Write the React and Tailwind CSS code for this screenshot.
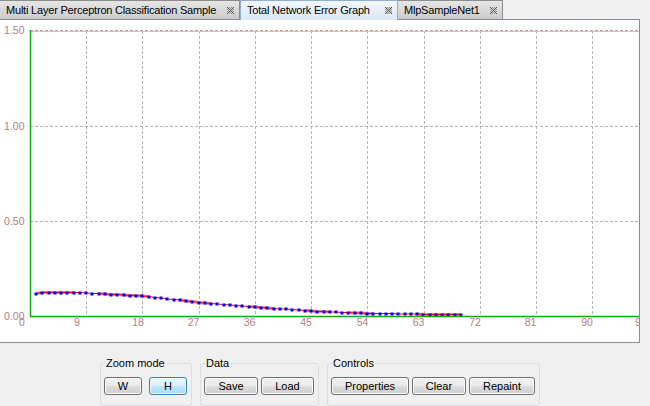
import React from 'react';

const FONT = { fontFamily: '"Liberation Sans", Arial, sans-serif' };

const keys = [
  [1, 293.3], [2, 292.3], [7, 292.3], [9, 293], [18, 296], [27, 302.3],
  [36, 307], [45, 311], [54, 313.3], [63, 314.3], [69, 314.5],
];

const yAt = (i) => {
  for (let k = 0; k < keys.length - 1; k++) {
    const [a, ya] = keys[k];
    const [b, yb] = keys[k + 1];
    if (i >= a && i <= b) return ya + ((yb - ya) * (i - a)) / (b - a);
  }
  return keys[keys.length - 1][1];
};

const points = Array.from({ length: 69 }, (_, n) => {
  const i = n + 1;
  return { i, x: 30 + 6.245 * i, y: Math.round(yAt(i) * 2) / 2 };
});

const bands = [[1, 7], [11, 19], [24, 29], [35, 39], [44, 48], [51, 55], [62, 69]];

const xTicks = [
  { g: 86.2, l: 77, t: '9' }, { g: 142.4, l: 138, t: '18' }, { g: 198.7, l: 193.5, t: '27' },
  { g: 254.9, l: 249.5, t: '36' }, { g: 311.1, l: 306, t: '45' }, { g: 367.3, l: 362.5, t: '54' },
  { g: 423.6, l: 418.5, t: '63' }, { g: 479.8, l: 475, t: '72' }, { g: 536, l: 530.5, t: '81' },
  { g: 592.2, l: 587, t: '90' },
];

const yTicks = [
  { y: 30.5, t: '1.50' }, { y: 126, t: '1.00' }, { y: 221, t: '0.50' }, { y: 316, t: '0.00' },
];

function CloseIcon() {
  const cells = [];
  for (let r = 0; r < 7; r++) {
    for (let c = 0; c < 7; c++) {
      let fill = (r + c) % 2 === 0 ? '#9a9a9a' : '#d4d4d4';
      if (r === c || r + c === 6) fill = '#505050';
      cells.push(<rect key={`${r}-${c}`} x={c} y={r} width="1" height="1" fill={fill} />);
    }
  }
  return (
    <svg width="7" height="7" viewBox="0 0 7 7" shapeRendering="crispEdges" className="shrink-0">
      {cells}
    </svg>
  );
}

function Tab({ label, width, active }) {
  return (
    <div
      className={
        'h-[20px] flex items-center pl-[6px] pr-[5px] text-[11px] tracking-[-0.2px] text-black border-r ' +
        (active
          ? 'bg-[linear-gradient(#f3f8fd,#d9e8f5)] border-l border-t border-[#8fb0cc]'
          : 'bg-[linear-gradient(#e6e6e6,#cccccc)] border-b border-t border-[#8c8c8c]')
      }
      style={{ width }}
    >
      <span className="whitespace-nowrap">{label}</span>
      <span className="ml-auto">
        <CloseIcon />
      </span>
    </div>
  );
}

function Btn({ children, w, selected }) {
  return (
    <button
      className={
        'h-[18px] rounded-[3px] border text-[11px] leading-none text-black shadow-[inset_0_0_0_1px_#fbfbfb] ' +
        (selected
          ? 'border-[#3c7fb1] bg-[linear-gradient(#eaf6fd_0%,#d9f0fc_50%,#bee6fd_50%,#a7d9f5_100%)]'
          : 'border-[#707070] bg-[linear-gradient(#f2f2f2_0%,#ebebeb_50%,#dddddd_50%,#cfcfcf_100%)]')
      }
      style={{ width: w }}
    >
      {children}
    </button>
  );
}

function Group({ title, children }) {
  return (
    <div className="relative border border-[#d5dfe5] rounded-[3px] pt-[13px] pl-[3px] pr-[4px] pb-[7px]">
      <span className="absolute -top-[8px] left-[4px] bg-[#f0f0f0] px-[1px] text-[11px] leading-[14px] text-black">
        {title}
      </span>
      <div className="flex gap-[3px]">{children}</div>
    </div>
  );
}

function Chart() {
  const line = points.map((p) => `${p.x},${p.y}`).join(' ');
  return (
    <svg width="639" height="322" className="block" style={FONT}>
      <g transform="translate(0,-20)">
        {xTicks.map((t) => (
          <line key={t.t} x1={Math.round(t.g) + 0.5} y1={31} x2={Math.round(t.g) + 0.5} y2={316}
            stroke="#b4b4b4" strokeDasharray="3 2" />
        ))}
        <line x1="30" y1="30.5" x2="639" y2="30.5" stroke="#a8a8a8" strokeDasharray="3 2" />
        <line x1="30" y1="31.5" x2="639" y2="31.5" stroke="#f2b8b8" />
        <line x1="30" y1="126.5" x2="639" y2="126.5" stroke="#b4b4b4" strokeDasharray="3 2" />
        <line x1="30" y1="221.5" x2="639" y2="221.5" stroke="#b4b4b4" strokeDasharray="3 2" />

        {bands.map(([a, b]) => (
          <polyline key={a}
            points={points.slice(a - 1, b).map((p) => `${p.x},${p.y}`).join(' ')}
            fill="none" stroke="#f08a8a" strokeWidth="3" />
        ))}
        <polyline points={line} fill="none" stroke="#ff0000" strokeWidth="1" />
        {points.map((p) => (
          <rect key={p.i} x={Math.round(p.x) - 1.5} y={Math.round(p.y) - 1.5} width="3" height="3"
            fill="#0000ff" />
        ))}

        <line x1="30.5" y1="30" x2="30.5" y2="316.5" stroke="#10aa10" strokeWidth="1.5" />
        <line x1="30" y1="316.5" x2="639" y2="316.5" stroke="#10aa10" strokeWidth="1.5" />

        {yTicks.map((t) => (
          <text key={t.t} x="24.5" y={t.y + 3.5} textAnchor="end" fontSize="10.5" fill="#b47e7e">{t.t}</text>
        ))}
        <text x="22" y="326" textAnchor="middle" fontSize="10.5" fill="#b47e7e">0</text>
        {xTicks.map((t) => (
          <text key={t.t} x={t.l} y="326" textAnchor="middle" fontSize="10.5" fill="#b47e7e">{t.t}</text>
        ))}
        <text x="641" y="326" textAnchor="middle" fontSize="10.5" fill="#b47e7e">99</text>
      </g>
    </svg>
  );
}

export default function App() {
  return (
    <div className="w-[650px] h-[406px] bg-[#f0f0f0] flex flex-col overflow-hidden" style={FONT}>
      <div className="flex w-[640px] h-[20px]">
        <Tab label="Multi Layer Perceptron Classification Sample" width={240} />
        <Tab label="Total Network Error Graph" width={158} active />
        <Tab label="MlpSampleNet1" width={105} />
        <div className="flex-1 border-b border-[#8c8c8c]" />
      </div>

      <div className="w-[640px] h-[323px] bg-white border-r border-b border-[#8c8c8c] overflow-hidden">
        <Chart />
      </div>

      <div className="flex-1 w-[640px] flex justify-center gap-2 pt-[20px]">
        <Group title="Zoom mode">
          <Btn w={38}>W</Btn>
          <span className="w-px" />
          <Btn w={38} selected>H</Btn>
        </Group>
        <Group title="Data">
          <Btn w={54}>Save</Btn>
          <Btn w={53}>Load</Btn>
        </Group>
        <Group title="Controls">
          <Btn w={78}>Properties</Btn>
          <Btn w={54}>Clear</Btn>
          <Btn w={66}>Repaint</Btn>
        </Group>
      </div>
    </div>
  );
}
